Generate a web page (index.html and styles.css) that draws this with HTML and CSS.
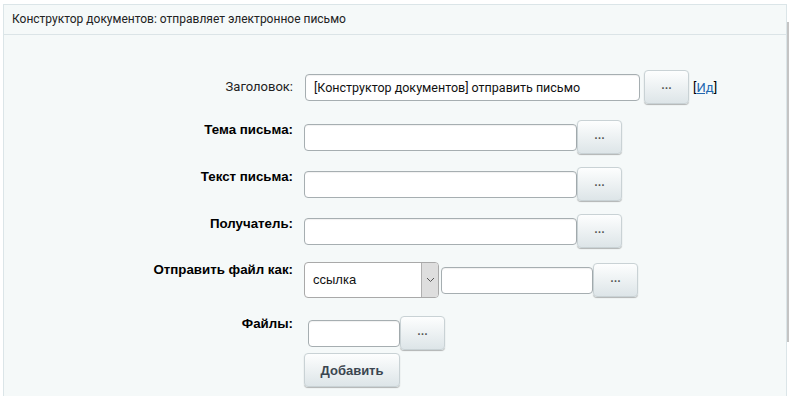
FILE: index.html
```html
<!DOCTYPE html>
<html lang="ru">
<head>
<meta charset="utf-8">
<link rel="stylesheet" href="styles.css">
</head>
<body>
<div class="panel">
  <div class="panel-head">Конструктор документов: отправляет электронное письмо</div>
  <div class="form">
    <div class="row row-title">
      <div class="label label-normal">Заголовок:</div>
      <div class="field">
        <div class="input input-title">[Конструктор документов] отправить письмо</div>
        <button class="dots gap">…</button>
        <span class="id">[<a href="#">Ид</a>]</span>
      </div>
    </div>
    <div class="row row-std">
      <div class="label">Тема письма:</div>
      <div class="field">
        <div class="input input-std"></div>
        <button class="dots">…</button>
      </div>
    </div>
    <div class="row row-std">
      <div class="label">Текст письма:</div>
      <div class="field">
        <div class="input input-std"></div>
        <button class="dots">…</button>
      </div>
    </div>
    <div class="row row-std">
      <div class="label">Получатель:</div>
      <div class="field">
        <div class="input input-std"></div>
        <button class="dots">…</button>
      </div>
    </div>
    <div class="row row-send">
      <div class="label label-send">Отправить файл как:</div>
      <div class="field">
        <div class="select">
          <span class="select-val">ссылка</span>
          <span class="select-arrow"><svg width="9" height="6" viewBox="0 0 9 6"><path d="M1 1 L4.5 4.5 L8 1" fill="none" stroke="#555" stroke-width="1"/></svg></span>
        </div>
        <div class="input input-send"></div>
        <button class="dots">…</button>
      </div>
    </div>
    <div class="row row-files">
      <div class="label label-files">Файлы:</div>
      <div class="field-col">
        <div class="field">
          <div class="input input-file"></div>
          <button class="dots">…</button>
        </div>
        <button class="add">Добавить</button>
      </div>
    </div>
  </div>
</div>
<div class="scroll-edge"></div>
</body>
</html>
```

FILE: styles.css
```css
html, body {
  margin: 0;
  padding: 0;
  background: #ffffff;
  overflow: hidden;
}
body {
  width: 789px;
  height: 396px;
  font-family: "Liberation Sans", Arial, sans-serif;
  font-size: 13px;
  color: #000;
}
.panel {
  margin: 4px 2px 0 3px;
  height: 400px;
  border: 1px solid #dbe5e8;
  border-bottom: none;
  background: #f5f9f9;
}
.panel-head {
  height: 29px;
  line-height: 29px;
  padding-left: 8px;
  border-bottom: 1px solid #dbe4e7;
  font-family: Roboto, "Liberation Sans", sans-serif;
  font-size: 12px;
  color: #222;
}
.form {
  padding-top: 35px;
}
.row {
  display: flex;
  align-items: flex-start;
}
.label {
  width: 289px;
  flex: none;
  text-align: right;
  font-weight: bold;
  font-size: 13.3px;
  line-height: 15px;
  color: #000;
  padding-top: 2px;
}
.label-normal {
  font-weight: normal;
  font-family: Roboto, "Liberation Sans", sans-serif;
  font-size: 13px;
  padding-top: 9px;
  color: #222;
}
.field {
  display: flex;
  align-items: center;
  margin-left: 11px;
}
.field-col {
  display: flex;
  flex-direction: column;
  align-items: flex-start;
}
.row-title {
  margin-top: 0;
}
.row-std {
  margin-top: 16px;
}
.row-std:nth-child(3), .row-std:nth-child(4) {
  margin-top: 13px;
}
.row-send {
  margin-top: 14px;
}
.row-files {
  margin-top: 18px;
}
.input {
  box-sizing: border-box;
  height: 27px;
  background: #fff;
  border: 1px solid #a6aeb1;
  border-radius: 4px;
  box-shadow: inset 0 1px 1px rgba(0,0,0,0.06);
}
.input-title {
  width: 335px;
  margin-left: 1px;
  padding-left: 8px;
  line-height: 25px;
  font-family: Roboto, "Liberation Sans", sans-serif;
  font-size: 12.5px;
  color: #111;
  white-space: nowrap;
  overflow: hidden;
}
.input-std {
  width: 273px;
}
.input-send {
  width: 152px;
  margin-left: 2px;
}
.input-file {
  width: 92px;
  margin-left: 4px;
}
.dots {
  box-sizing: border-box;
  width: 45px;
  height: 34px;
  padding: 0 0 4px 0;
  border: 1px solid #c9d2d5;
  border-radius: 4px;
  background: linear-gradient(#fdfefe, #dde5e8);
  box-shadow: 0 1px 1px rgba(0,0,0,0.28);
  font-family: "Liberation Sans", Arial, sans-serif;
  font-size: 11px;
  font-weight: bold;
  color: #555;
  line-height: 14px;
  letter-spacing: 0;
}
.gap {
  margin-left: 4px;
}
.id {
  margin-left: 4px;
  font-family: Roboto, "Liberation Sans", sans-serif;
  font-size: 13px;
  color: #000;
  margin-top: 1px;
}
.id a {
  color: #2067b0;
  text-decoration: underline;
}
.select {
  box-sizing: border-box;
  width: 135px;
  height: 36px;
  display: flex;
  background: #fff;
  border: 1px solid #a9a9a9;
  border-radius: 4px;
  overflow: hidden;
}
.select-val {
  flex: 1;
  padding-left: 8px;
  line-height: 34px;
  font-size: 13px;
  color: #111;
}
.select-arrow {
  width: 16px;
  background: #dedede;
  border-left: 1px solid #b0b0b0;
  display: flex;
  align-items: center;
  justify-content: center;
}
.label-send {
  padding-top: 0;
}
.label-files {
  padding-top: 0;
}
.row-files .field {
  margin-left: 11px;
}
.add {
  box-sizing: border-box;
  margin: 3px 0 0 11px;
  width: 96px;
  height: 34px;
  border: 1px solid #c9d2d5;
  border-radius: 4px;
  background: linear-gradient(#fdfefe, #dde5e8);
  box-shadow: 0 1px 1px rgba(0,0,0,0.28);
  font-family: "Liberation Sans", Arial, sans-serif;
  font-size: 13px;
  font-weight: bold;
  color: #3b4650;
  padding: 0;
}
.scroll-edge {
  position: fixed;
  right: 0;
  top: 22px;
  width: 2px;
  height: 320px;
  background: #c4c4c4;
}
```
